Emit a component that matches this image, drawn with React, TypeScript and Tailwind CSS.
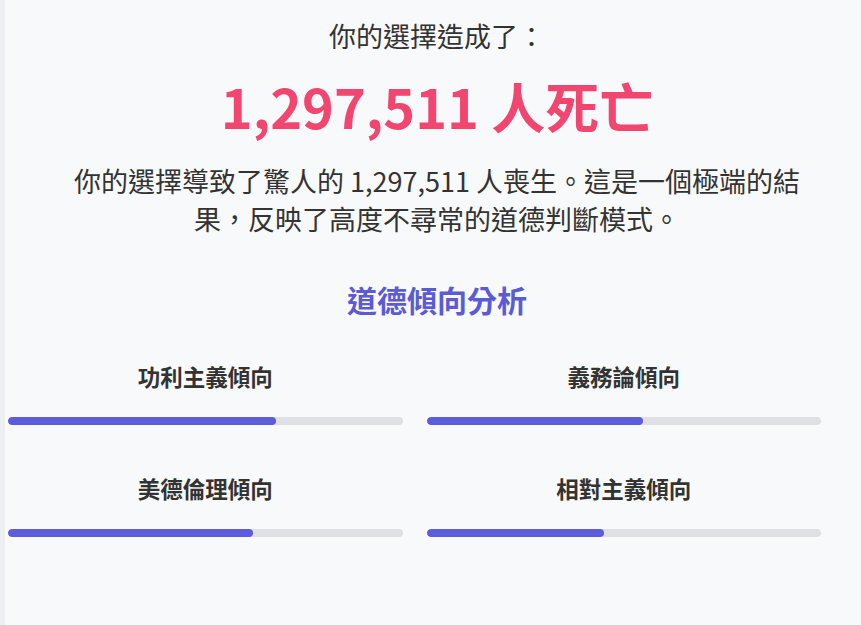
import React from "react";

const font = { fontFamily: '"Noto Sans CJK TC", "Noto Sans", sans-serif' };

type Trait = { label: string; value: number };

const traits: Trait[] = [
  { label: "功利主義傾向", value: 68 },
  { label: "義務論傾向", value: 55 },
  { label: "美德倫理傾向", value: 62 },
  { label: "相對主義傾向", value: 45 },
];

function TraitBar({ label, value }: Trait) {
  return (
    <div className="flex flex-col">
      <div className="text-center text-[22.5px] leading-[31px] font-bold text-[#333]">{label}</div>
      <div className="mt-[25.5px] h-[8px] w-full rounded-full bg-[#dfe0e3] overflow-hidden">
        <div className="h-full rounded-full bg-[#5c5cdc]" style={{ width: `${value}%` }} />
      </div>
    </div>
  );
}

export default function App() {
  return (
    <div
      className="min-h-[625px] w-full bg-[#f8f9fa] border-l-[5px] border-[#eceef1] text-[#333]"
      style={font}
    >
      {/* result summary */}
      <div className="ml-[8px] w-[848px] pt-[17px] flex flex-col items-center text-center">
        <p className="text-[27px] leading-[38px]">你的選擇造成了：</p>
        <h1 className="mt-[16.5px] text-[54px] leading-[67px] font-bold text-[#f0466f]">
          1,297,511 人死亡
        </h1>
        <p className="mt-[23.5px] w-[745px] text-[27px] leading-[38px]">
          你的選擇導致了驚人的 1,297,511 人喪生。這是一個極端的結果，反映了高度不尋常的道德判斷模式。
        </p>
        <h2 className="mt-[40px] text-[30px] leading-[42px] font-bold text-[#5b5bd6]">道德傾向分析</h2>
      </div>

      {/* trait grid */}
      <div className="ml-[3px] mt-[40.5px] w-[813px] grid grid-cols-2 gap-x-[24px] gap-y-[47.5px]">
        {traits.map((t) => (
          <TraitBar key={t.label} {...t} />
        ))}
      </div>
    </div>
  );
}
